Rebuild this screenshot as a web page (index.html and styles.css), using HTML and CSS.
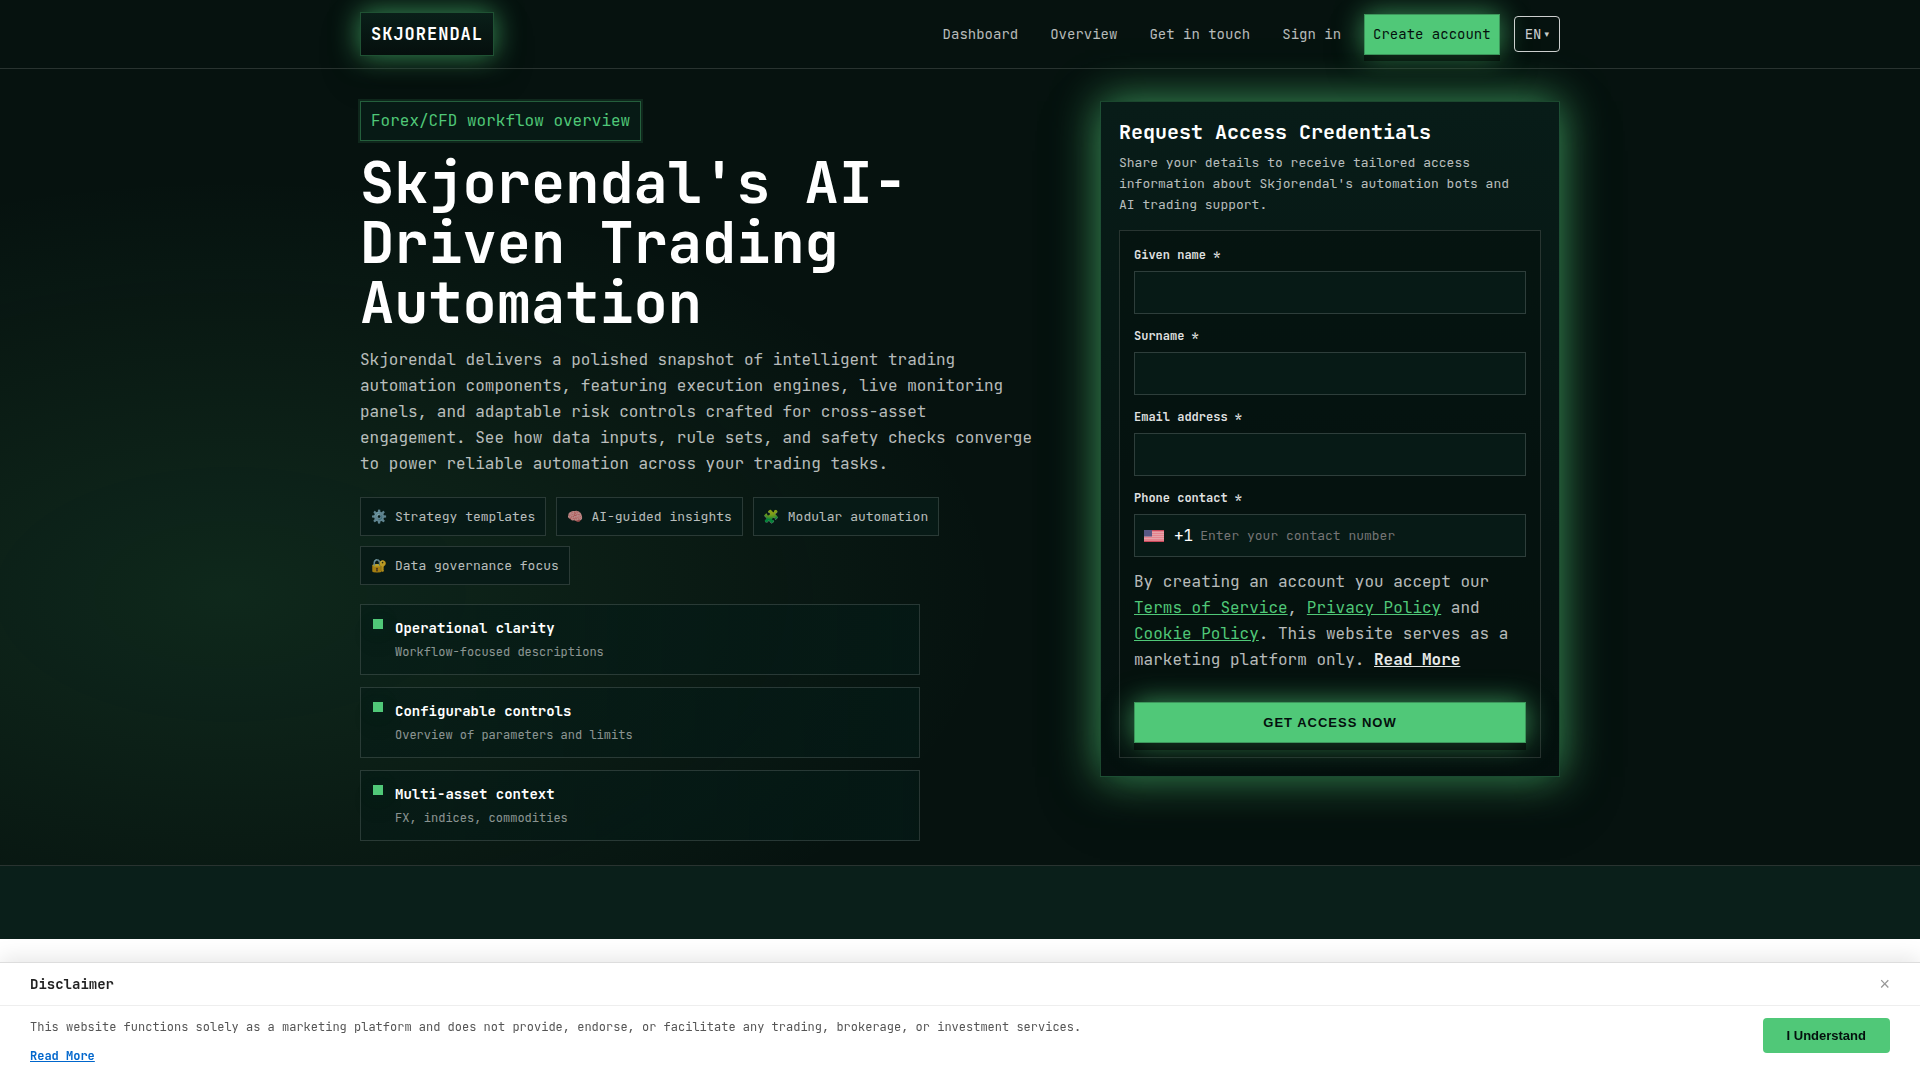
FILE: index.html
```html
<!DOCTYPE html>
<html lang="en">
<head>
<meta charset="utf-8">
<meta name="viewport" content="width=device-width, initial-scale=1">
<title>Skjorendal</title>
<link rel="stylesheet" href="styles.css">
</head>
<body>
<header class="site-header">
  <div class="container header-row">
    <a class="logo" href="#">SKJORENDAL</a>
    <nav class="nav" aria-label="Main">
      <a class="nav-link" href="#">Dashboard</a>
      <a class="nav-link" href="#">Overview</a>
      <a class="nav-link" href="#">Get in touch</a>
      <a class="nav-link" href="#">Sign in</a>
      <a class="nav-link nav-cta" href="#">Create account</a>
      <button class="lang" type="button"><span>EN</span><span class="caret">▾</span></button>
    </nav>
  </div>
</header>
<main>
  <section class="hero">
    <div class="container hero-grid">
      <div class="intro">
        <p class="badge">Forex/CFD workflow overview</p>
        <h1>Skjorendal's AI-Driven Trading Automation</h1>
        <p class="lead">Skjorendal delivers a polished snapshot of intelligent trading automation components, featuring execution engines, live monitoring panels, and adaptable risk controls crafted for cross-asset engagement. See how data inputs, rule sets, and safety checks converge to power reliable automation across your trading tasks.</p>
        <ul class="chips">
          <li class="chip"><span class="emoji">⚙️</span>Strategy templates</li>
          <li class="chip"><span class="emoji">🧠</span>AI-guided insights</li>
          <li class="chip"><span class="emoji">🧩</span>Modular automation</li>
          <li class="chip"><span class="emoji">🔐</span>Data governance focus</li>
        </ul>
        <ul class="features">
          <li class="feature"><span class="marker"></span><div class="feature-text"><strong>Operational clarity</strong><span>Workflow-focused descriptions</span></div></li>
          <li class="feature"><span class="marker"></span><div class="feature-text"><strong>Configurable controls</strong><span>Overview of parameters and limits</span></div></li>
          <li class="feature"><span class="marker"></span><div class="feature-text"><strong>Multi-asset context</strong><span>FX, indices, commodities</span></div></li>
        </ul>
      </div>
      <aside class="card">
        <h2>Request Access Credentials</h2>
        <p class="card-note">Share your details to receive tailored access information about Skjorendal's automation bots and AI trading support.</p>
        <form class="form">
          <div class="field"><label for="given">Given name *</label><input id="given" class="control" type="text"></div>
          <div class="field"><label for="surname">Surname *</label><input id="surname" class="control" type="text"></div>
          <div class="field"><label for="email">Email address *</label><input id="email" class="control" type="email"></div>
          <div class="field">
            <label for="phone">Phone contact *</label>
            <div class="control phone">
              <svg class="flag" viewBox="0 0 20 12" width="20" height="12" aria-hidden="true">
                <rect width="20" height="12" fill="#e4838e"/>
                <path d="M0 .5h20M0 11.5h20" stroke="#c8485a"/>
                <path d="M0 2.5h20M0 4.5h20M0 6.5h20M0 8.5h20" stroke="#e5a9b0" stroke-width=".8"/>
                <rect width="8" height="6.5" fill="#575784"/>
              </svg>
              <span class="dial">+1</span>
              <input id="phone" type="tel" placeholder="Enter your contact number">
            </div>
          </div>
          <p class="consent">By creating an account you accept our <a href="#">Terms of Service</a>, <a href="#">Privacy Policy</a> and <a href="#">Cookie Policy</a>. This website serves as a marketing platform only. <a class="more" href="#">Read More</a></p>
          <button class="submit" type="submit">GET ACCESS NOW</button>
        </form>
      </aside>
    </div>
  </section>
  <section class="band"></section>
</main>
<section class="disclaimer" aria-label="Disclaimer">
  <div class="disclaimer-head">
    <strong>Disclaimer</strong>
    <button class="close" type="button" aria-label="Close">×</button>
  </div>
  <div class="disclaimer-body">
    <div class="disclaimer-text">
      <p>This website functions solely as a marketing platform and does not provide, endorse, or facilitate any trading, brokerage, or investment services.</p>
      <a href="#">Read More</a>
    </div>
    <button class="accept" type="button">I Understand</button>
  </div>
</section>
</body>
</html>
```
FILE: styles.css
```css
:root {
  --accent: #50c878;
  --base: #06120f;
  --mono: "JetBrains Mono", "DejaVu Sans Mono", "Liberation Mono", monospace;
  --line: rgba(255, 255, 255, .14);
  --glow: 0 0 28px rgba(80, 200, 120, .7);
}
* { box-sizing: border-box; }
body {
  margin: 0;
  background: #fff;
  color: rgba(255, 255, 255, .72);
  font-family: var(--mono);
  font-size: 16px;
  line-height: 26px;
}
h1, h2, p, ul { margin: 0; padding: 0; }
ul { list-style: none; }
.container { width: 100%; max-width: 1200px; margin: 0 auto; }

.site-header { background: var(--base); border-bottom: 1px solid var(--line); }
.header-row { display: flex; align-items: center; justify-content: space-between; padding: 12px 0; }
.logo {
  padding: 8px 10px;
  border: 1px solid rgba(80, 200, 120, .35);
  background: linear-gradient(#0a1f19, #050f0d) padding-box, var(--base);
  box-shadow: var(--glow), 0 16px 40px rgba(0, 0, 0, .3);
  color: #fff;
  font-size: 17px;
  font-weight: 700;
  letter-spacing: 1px;
  text-decoration: none;
}
.nav { display: flex; align-items: center; gap: 14px; }
.nav-link {
  padding: 8px;
  border: 1px solid transparent;
  color: rgba(255, 255, 255, .72);
  font-size: 14px;
  line-height: 23px;
  text-decoration: none;
}
.nav-cta {
  border-color: #3d965b;
  background: var(--accent);
  box-shadow: 0 6px 0 rgba(0, 0, 0, .5), var(--glow), 0 16px 40px rgba(0, 0, 0, .3);
  color: #04100d;
}
.lang {
  display: flex;
  align-items: center;
  gap: 3px;
  height: 36px;
  padding: 0 10px;
  border: 1px solid rgba(255, 255, 255, .8);
  border-radius: 4px;
  background: transparent;
  color: rgba(255, 255, 255, .8);
  font: 14px/20px var(--mono);
}
.caret { font: 9px/20px "DejaVu Sans", sans-serif; }

.hero {
  padding: 32px 0 24px;
  border-bottom: 1px solid var(--line);
  background:
    radial-gradient(960px 520px at 12% 66%, rgba(80, 200, 120, .12), transparent 80%),
    var(--base);
}
.hero-grid { display: grid; grid-template-columns: minmax(0, 1fr) 460px; gap: 32px; align-items: start; }
.intro { display: flex; flex-direction: column; align-items: flex-start; gap: 12px; }
.badge {
  padding: 6px 10px;
  border: 1px solid rgba(80, 200, 120, .4);
  background: #071a15;
  box-shadow: 0 0 0 2px rgba(80, 200, 120, .12);
  color: var(--accent);
}
h1 { color: #fff; font-size: 57px; line-height: 60px; font-weight: 700; }
.lead { max-width: 676px; margin-top: 2px; }
.chips { display: flex; flex-wrap: wrap; gap: 10px; margin-top: 8px; }
.chip {
  display: flex;
  gap: 8px;
  padding: 8px 10px;
  border: 1px solid var(--line);
  background: #071a16;
  font-size: 13px;
  line-height: 21px;
}
.emoji { width: 16px; font-family: "Noto Color Emoji", sans-serif; }
.features { display: grid; gap: 12px; width: 100%; max-width: 560px; margin-top: 7px; }
.feature {
  display: flex;
  gap: 12px;
  padding: 12px;
  border: 1px solid var(--line);
  background: linear-gradient(90deg, rgba(4, 26, 22, .5), rgba(4, 26, 22, .7));
}
.marker {
  width: 10px;
  height: 10px;
  margin-top: 2px;
  background: var(--accent);
  box-shadow: 0 0 24px rgba(80, 200, 120, .12), 0 10px 24px rgba(0, 0, 0, .2);
}
.feature-text { display: grid; gap: 2px; font-size: 12px; line-height: 20px; color: rgba(255, 255, 255, .55); }
.feature-text strong { color: #fff; font-size: 14px; line-height: 23px; }

.card {
  padding: 18px;
  border: 1px solid rgba(80, 200, 120, .3);
  background: linear-gradient(#081c18, #05110f);
  box-shadow: 0 0 42px rgba(80, 200, 120, .75), 0 20px 60px rgba(0, 0, 0, .3);
}
h2 { color: #fff; font-size: 20px; line-height: 24px; font-weight: 700; }
.card-note { max-width: 400px; margin: 8px 0 15px; font-size: 13px; line-height: 21px; }
.form {
  display: grid;
  gap: 12px;
  padding: 14px;
  border: 1px solid var(--line);
  background: rgba(5, 16, 13, .6);
}
.field { display: grid; gap: 6px; }
.field label { color: rgba(255, 255, 255, .88); font-size: 12px; line-height: 20px; font-weight: 700; }
.control {
  width: 100%;
  height: 43px;
  padding: 0 9px;
  border: 1px solid rgba(255, 255, 255, .16);
  background: #071a16;
  color: #fff;
  font: 13px/20px var(--mono);
}
.phone { display: flex; align-items: center; }
.dial { margin: 0 7px 0 10px; font-size: 16px; }
.phone input {
  flex: 1;
  min-width: 0;
  padding: 0;
  border: 0;
  background: none;
  color: #fff;
  font: 13px/20px var(--mono);
}
.phone input::placeholder { color: #757575; }
.consent a { color: var(--accent); }
.consent .more { color: #e6e9e8; font-weight: 700; }
.submit {
  height: 41px;
  margin-top: 17px;
  border: 1px solid #3d965b;
  background: var(--accent);
  box-shadow: 0 7px 0 rgba(0, 0, 0, .5), var(--glow), 0 16px 40px rgba(0, 0, 0, .3);
  color: #04100d;
  font: 700 13px/20px "Liberation Sans", Arial, sans-serif;
  letter-spacing: 1px;
}
.band { height: 73px; background: #0a1f1a; }

.disclaimer {
  position: fixed;
  right: 0;
  bottom: 0;
  left: 0;
  border-top: 1px solid #ddd;
  background: #fff;
  box-shadow: 0 -4px 20px rgba(0, 0, 0, .1);
}
.disclaimer-head {
  display: flex;
  align-items: center;
  justify-content: space-between;
  height: 43px;
  padding: 0 30px;
  border-bottom: 1px solid #eee;
  color: #222;
  font-size: 14px;
}
.close { padding: 0; border: 0; background: none; color: #999; font: 18px/20px "Liberation Sans", Arial, sans-serif; }
.disclaimer-body {
  display: flex;
  align-items: flex-start;
  justify-content: space-between;
  gap: 24px;
  padding: 12px 30px;
}
.disclaimer-text { display: grid; gap: 10px; padding-bottom: 2px; color: #555; font-size: 12px; line-height: 19px; }
.disclaimer-text a { color: #06c; font-weight: 700; }
.accept {
  height: 35px;
  padding: 0 24px;
  border: 0;
  border-radius: 4px;
  background: var(--accent);
  color: #04100d;
  font: 700 13px/20px "Liberation Sans", Arial, sans-serif;
}
```
